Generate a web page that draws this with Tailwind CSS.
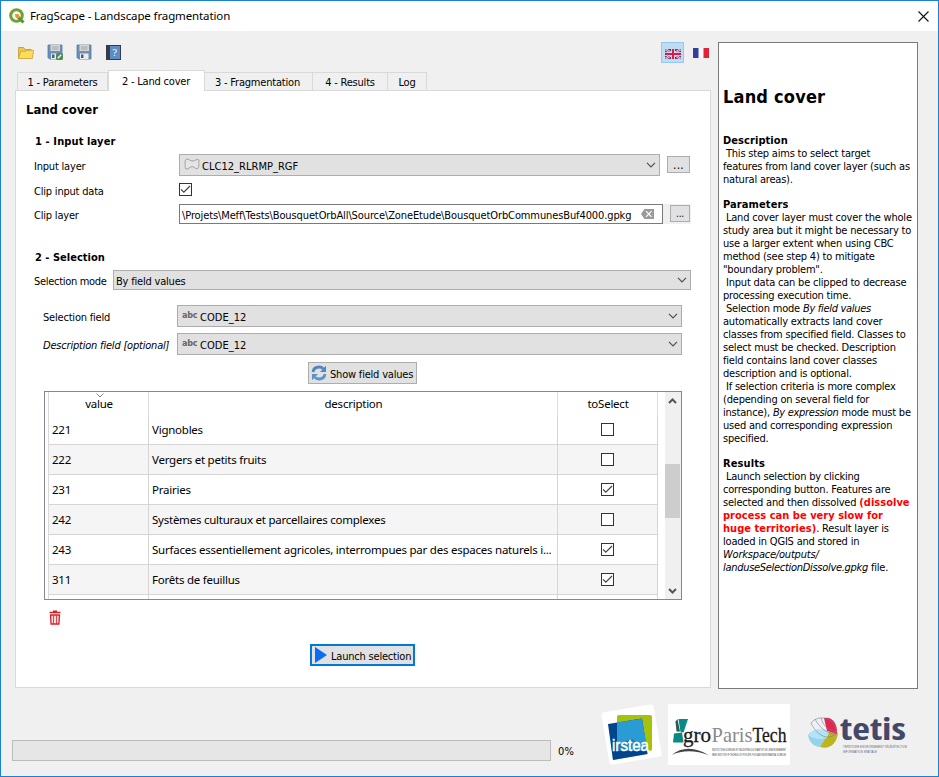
<!DOCTYPE html>
<html lang="en">
<head>
<meta charset="utf-8">
<title>FragScape - Landscape fragmentation</title>
<script src="https://cdn.jsdelivr.net/npm/@tailwindcss/browser@4"></script>
</head>
<body class="w-[939px] h-[777px] overflow-hidden">
<svg class="hidden">
  <symbol id="chev" viewBox="0 0 10 6"><path d="M1 .8 5 4.8 9 .8" fill="none" stroke="#505050" stroke-width="1.2"/></symbol>
  <symbol id="box" viewBox="0 0 13 13"><rect x=".5" y=".5" width="12" height="12" fill="#fff" stroke="#333"/></symbol>
  <symbol id="boxon" viewBox="0 0 13 13"><rect x=".5" y=".5" width="12" height="12" fill="#fff" stroke="#333"/><path d="M2 6.3 4.8 9.2 11 3" fill="none" stroke="#444" stroke-width="1.2"/></symbol>
  <symbol id="floppy" viewBox="0 0 16 16"><path d="M1 1h14v14H2.5L1 13.5z" fill="#6a8fbd" stroke="#5b7a9c" stroke-width=".8"/><rect x="3.500" y=".8" width="9.500" height="6.200" fill="#d6d6d0"/><path d="M5 3h6.500M5 5h6.500" stroke="#999" stroke-width=".8"/><rect x="4" y="9.500" width="8.500" height="5.500" fill="#ececea"/><rect x="5" y="10.500" width="2.500" height="3.500" fill="#40618d"/></symbol>
</svg>
<div class="w-[939px] h-[777px] border border-[#1a80d5] bg-[#f0f0f0] flex flex-col font-['DejaVu_Sans_Condensed','DejaVu_Sans',sans-serif] font-stretch-condensed text-[11px] leading-[13px] tracking-[-0.2px] text-black whitespace-nowrap">
  <header class="h-[30px] bg-white flex items-center pl-2 pr-[9px] shrink-0">
    <svg class="size-4" viewBox="0 0 16 16"><circle cx="7.500" cy="7.500" r="5.800" fill="none" stroke="#6ea52c" stroke-width="3"/><path d="M9 9 14.500 14.500" stroke="#589632" stroke-width="3"/><path d="M6 6h3.500L11 9 9 10.500 6.500 9.500z" fill="#f0933a"/></svg>
    <h1 class="ml-[5px] font-['Noto_Sans',sans-serif] text-[11.5px] leading-4 tracking-[-0.12px]">FragScape - Landscape fragmentation</h1>
    <svg class="size-[11px] ml-auto" viewBox="0 0 11 11"><path d="M.5.5l10 10M10.500.5l-10 10" stroke="#111" stroke-width="1.100"/></svg>
  </header>

  <div class="flex h-[658px] pt-[11px] pl-[14px] shrink-0">
    <section class="w-[696px] flex flex-col">
      <div class="h-[28px] flex items-start pl-[3px] pr-px">
        <svg class="w-4 h-[14px] mt-[4px]" viewBox="0 0 16 14"><path d="M.6 12.500V1.500h5l1.500 2h6v2" fill="#edc654" stroke="#b99429" stroke-width=".8"/><path d="M.6 12.500 2.600 5.300 8 5.300 9 4.300h6.500l-1.200 8.200z" fill="#ffdb5c" stroke="#caa233" stroke-width=".8"/></svg>
        <span class="relative ml-[13px] mt-[2px]"><svg class="size-4"><use href="#floppy"/></svg><svg class="absolute left-[9px] top-[9px] size-[7px]" viewBox="0 0 7 7"><rect width="7" height="7" rx="1.500" fill="#4d8b57"/><path d="M1.800 5.200 5.200 1.800" stroke="#fff" stroke-width="1.300"/></svg></span>
        <svg class="size-4 ml-[13px] mt-[2px]"><use href="#floppy"/></svg>
        <svg class="size-[15px] ml-[14px] mt-[3px]" viewBox="0 0 15 15"><rect x=".5" y=".5" width="14" height="14" fill="#5d8dc2" stroke="#333c49"/><rect x=".5" y=".5" width="3.500" height="14" fill="#353d48"/><text x="6.200" y="11.300" font-size="10" font-family="DejaVu Serif" fill="#fff">?</text></svg>
        <span class="ml-auto w-[23px] h-[21px] border border-[#90c8f6] bg-[#bfdcf3] flex justify-center pt-[6px]">
          <svg class="w-4 h-[10px]" viewBox="0 0 16 10"><rect width="16" height="10" fill="#3c4a94"/><path d="M0 0 16 10M16 0 0 10" stroke="#f3e8f0" stroke-width="2.200"/><path d="M0 0 16 10M16 0 0 10" stroke="#d5254a" stroke-width=".8"/><path d="M8 0v10M0 5h16" stroke="#f3e8f0" stroke-width="3.600"/><path d="M8 0v10M0 5h16" stroke="#d3204b" stroke-width="2"/></svg>
        </span>
        <svg class="w-4 h-[10px] ml-[9px] mr-px mt-[6px]" viewBox="0 0 16 10"><rect width="16" height="10" fill="#f7f7f9"/><rect width="5.500" height="10" fill="#343f99"/><rect x="10.500" width="5.500" height="10" fill="#df2339"/></svg>
      </div>
      <nav class="h-[21px] flex items-end pl-[2px] relative -mb-px z-10">
        <span class="w-[91px] h-[19px] border border-b-0 border-[#d9d9d9] pt-[3px] text-center">1 - Parameters</span>
        <span class="w-[97px] h-[21px] border border-b-0 border-[#d9d9d9] bg-white pt-[4px] pr-px text-center">2 - Land cover</span>
        <span class="w-[108px] h-[19px] border border-l-0 border-b-0 border-[#d9d9d9] pt-[3px] pr-[2px] text-center">3 - Fragmentation</span>
        <span class="w-[75px] h-[19px] border border-l-0 border-b-0 border-[#d9d9d9] pt-[3px] text-center">4 - Results</span>
        <span class="w-[39px] h-[19px] border border-l-0 border-b-0 border-[#d9d9d9] pt-[3px] text-center">Log</span>
      </nav>
      <main class="h-[598px] bg-white border border-[#d9d9d9] flex flex-col">
        <h2 class="pl-[10px] mt-[11px] h-4 font-bold text-[13px] leading-4 tracking-[-0.05px]">Land cover</h2>
        <h3 class="pl-[19px] mt-[17px] font-bold tracking-[0.12px]">1 - Input layer</h3>
        <div class="flex items-center h-[22px] mt-[6px] pl-[18px]">
          <label class="w-[145px] pt-[2px]">Input layer</label>
          <div class="w-[481px] h-[22px] border border-[#adadad] bg-[#e1e1e1] flex items-center pl-1 pr-[3px]">
            <svg class="w-4 h-[13px] mb-[2px]" viewBox="0 0 16 13"><path d="M2.500 1.200C5 .3 6 3.500 9 3c2-.3 3-1.800 5.500-1.300 1.300 1.300 0 2.600.3 4 .3 1.600 0 3.500-1.300 5C11 11 10.500 8.500 8 8.700 5.500 8.900 4.500 11.500 2 11 .5 9.500 1.500 8 1.200 6.200.8 4 .8 2.500 2.500 1.200z" fill="#e4e4e4" stroke="#989898" stroke-width=".9"/></svg>
            <span class="ml-[2px] pt-[2px] tracking-[0.03px]">CLC12_RLRMP_RGF</span>
            <svg class="w-[10px] h-[6px] ml-auto"><use href="#chev"/></svg>
          </div>
          <button class="ml-[7px] mb-px w-[23px] h-[17px] border border-[#adadad] bg-[#e1e1e1] text-[12px] leading-[14px] tracking-[0.2px]">...</button>
        </div>
        <div class="flex items-start h-[15px] mt-[7px] pl-[18px]">
          <label class="w-[145px] pt-[2px]">Clip input data</label>
          <svg class="size-[13px]"><use href="#boxon"/></svg>
        </div>
        <div class="flex items-center h-[20px] mt-[6px] pl-[18px]">
          <label class="w-[145px] pt-[2px]">Clip layer</label>
          <div class="w-[484px] h-[20px] border border-[#7a7a7a] bg-white flex items-center pl-[2px] pr-2">
            <span class="pt-[2px] tracking-[-0.11px]">\Projets\Meff\Tests\BousquetOrbAll\Source\ZoneEtude\BousquetOrbCommunesBuf4000.gpkg</span>
            <svg class="w-[13px] h-[10px] ml-auto" viewBox="0 0 13 10"><path d="M0 5 3.500 0H13V10H3.500z" fill="#9a9a9a"/><path d="M5 2.200 10.500 7.800M10.500 2.200 5 7.800" stroke="#fff" stroke-width="1.200"/></svg>
          </div>
          <div class="w-[28px] h-[20px] bg-[#f0f0f0] pl-[7px] pt-px"><button class="block w-5 h-[17px] border border-[#adadad] bg-[#e1e1e1] text-[10px] leading-[14px]">...</button></div>
        </div>
        <h3 class="pl-[19px] mt-[27px] font-bold tracking-[0.02px]">2 - Selection</h3>
        <div class="flex items-center h-[20px] mt-[6px] pl-[18px]">
          <label class="w-[79px] pt-[2px] tracking-[-0.3px]">Selection mode</label>
          <div class="w-[578px] h-[20px] border border-[#adadad] bg-[#e1e1e1] flex items-center pl-[2px] pr-[3px]"><span class="pt-[2px]">By field values</span><svg class="w-[10px] h-[6px] ml-auto"><use href="#chev"/></svg></div>
        </div>
        <div class="flex items-center h-[22px] mt-[15px] pl-[27px]">
          <label class="w-[134px] pt-[2px]">Selection field</label>
          <div class="w-[505px] h-[22px] border border-[#adadad] bg-[#e1e1e1] flex items-center pl-1 pr-[3px]"><b class="text-[9px] text-[#666] w-[18px] mb-[2px]">abc</b><span class="pt-[2px] tracking-[0.05px]">CODE_12</span><svg class="w-[10px] h-[6px] ml-auto"><use href="#chev"/></svg></div>
        </div>
        <div class="flex items-center h-[22px] mt-[6px] pl-[27px]">
          <label class="w-[134px] pt-[2px] italic">Description field [optional]</label>
          <div class="w-[505px] h-[22px] border border-[#adadad] bg-[#e1e1e1] flex items-center pl-1 pr-[3px]"><b class="text-[9px] text-[#666] w-[18px] mb-[2px]">abc</b><span class="pt-[2px] tracking-[0.05px]">CODE_12</span><svg class="w-[10px] h-[6px] ml-auto"><use href="#chev"/></svg></div>
        </div>
        <button class="ml-[292px] mt-[7px] w-[109px] h-[22px] border border-[#adadad] bg-[#e1e1e1] flex items-center pl-[2px] shrink-0">
          <svg class="size-4 mb-px" viewBox="0 0 16 16"><path d="M2 7C2.500 3.500 5 2 8 2c2 0 3.300.6 4.300 1.800" fill="none" stroke="#4f86c0" stroke-width="2.800"/><path d="M15 .8V7H9z" fill="#4f86c0"/><path d="M14 9c-.5 3.500-3 5-6 5-2 0-3.300-.6-4.300-1.800" fill="none" stroke="#5b93cd" stroke-width="2.800"/><path d="M1 15.200V9h6z" fill="#5b93cd"/></svg>
          <span class="ml-[3px] pt-[2px]">Show field values</span>
        </button>
        <div class="ml-[28px] mt-[7px] w-[638px] h-[209px] border border-[#828790] flex shrink-0 overflow-hidden font-['Noto_Sans',sans-serif] text-[11.5px] leading-4 tracking-[-0.24px]">
          <div class="ml-[3px] w-[610px] border-l border-[#d9d9d9] h-[207px]">
            <div class="h-[23px] flex text-center pt-[4px] relative">
              <svg class="absolute left-[47px] top-px w-[8px] h-[5px]" viewBox="0 0 8 5"><path d="M.5.5 4 4 7.500.5" fill="none" stroke="#888"/></svg>
              <span class="w-[100px]">value</span><span class="w-[409px]">description</span><span class="w-[100px]">toSelect</span>
              <i class="absolute left-[99px] top-0 h-6 w-px bg-[#dedede]"></i><i class="absolute left-[508px] top-0 h-6 w-px bg-[#dedede]"></i><i class="absolute left-[608px] top-0 h-6 w-px bg-[#dedede]"></i>
            </div>
            <div class="grid grid-cols-[100px_409px_100px] auto-rows-[30px] w-[609px] *:border-r *:border-b *:border-[#d5d5d5] *:flex *:items-center">
              <span class="pl-[3px]">221</span><span class="pl-[3px]">Vignobles</span><span class="justify-center"><svg class="size-[13px]"><use href="#box"/></svg></span>
              <span class="pl-[3px] bg-[#f5f5f5]">222</span><span class="pl-[3px] bg-[#f5f5f5]">Vergers et petits fruits</span><span class="bg-[#f5f5f5] justify-center"><svg class="size-[13px]"><use href="#box"/></svg></span>
              <span class="pl-[3px]">231</span><span class="pl-[3px]">Prairies</span><span class="justify-center"><svg class="size-[13px]"><use href="#boxon"/></svg></span>
              <span class="pl-[3px] bg-[#f5f5f5]">242</span><span class="pl-[3px] bg-[#f5f5f5]">Systèmes culturaux et parcellaires complexes</span><span class="bg-[#f5f5f5] justify-center"><svg class="size-[13px]"><use href="#box"/></svg></span>
              <span class="pl-[3px]">243</span><span class="pl-[3px]">Surfaces essentiellement agricoles, interrompues par des espaces naturels i...</span><span class="justify-center"><svg class="size-[13px]"><use href="#boxon"/></svg></span>
              <span class="pl-[3px] bg-[#f5f5f5]">311</span><span class="pl-[3px] bg-[#f5f5f5]">Forêts de feuillus</span><span class="bg-[#f5f5f5] justify-center"><svg class="size-[13px]"><use href="#boxon"/></svg></span>
              <span></span><span></span><span></span>
            </div>
          </div>
          <div class="ml-auto w-4 bg-[#f0f0f0] flex flex-col items-center pt-[6px] pb-[5px]">
            <svg class="w-[9px] h-[6px] mr-px" viewBox="0 0 9 6"><path d="M1 5 4.500 1.500 8 5" fill="none" stroke="#555" stroke-width="2"/></svg>
            <div class="w-[15px] h-[54px] bg-[#cdcdcd] mt-[60px] mr-px"></div>
            <svg class="w-[9px] h-[6px] mt-auto mr-px" viewBox="0 0 9 6"><path d="M1 1 4.500 4.500 8 1" fill="none" stroke="#555" stroke-width="2"/></svg>
          </div>
        </div>
        <svg class="ml-[33px] mt-[10px] w-3 h-[15px] shrink-0" viewBox="0 0 12 15"><path d="M.5 2.500h11M4 1.200h4" stroke="#d42027" stroke-width="1.300"/><path d="M1.500 5h9l-.6 9H2.100z" fill="#fbdcdc" stroke="#d42027" stroke-width="1.300"/><path d="M4.500 5.500v8M7.500 5.500v8" stroke="#d42027" stroke-width=".8"/></svg>
        <button class="ml-[294px] mt-[19px] w-[105px] h-[22px] border-2 border-[#0078d7] bg-[#e1e1e1] flex items-center pl-[3px] shrink-0">
          <svg class="w-3 h-4" viewBox="0 0 12 16"><path d="M0 0 12 8 0 16z" fill="#0a6cf5"/></svg><span class="ml-[4px] pt-[2px]">Launch selection</span>
        </button>
      </main>
    </section>

    <aside class="ml-[7px] w-[200px] h-[647px] border border-[#7a7a7a] bg-white pl-1 pt-[42px]">
      <h2 class="font-bold text-[18px] leading-6 tracking-[0.2px]">Land cover</h2>
      <h4 class="font-bold mt-[25px] tracking-[0.07px]">Description</h4>
      <p>&nbsp;This step aims to select target<br>features from land cover layer (such as<br>natural areas).</p>
      <h4 class="font-bold mt-3 tracking-[0.1px]">Parameters</h4>
      <p>&nbsp;Land cover layer must cover the whole<br>study area but it might be necessary to<br>use a larger extent when using CBC<br>method (see step 4) to mitigate<br>"boundary problem".<br>&nbsp;Input data can be clipped to decrease<br>processing execution time.<br>&nbsp;Selection mode <i class="tracking-[-0.3px]">By field values</i><br>automatically extracts land cover<br>classes from specified field. Classes to<br>select must be checked. Description<br>field contains land cover classes<br>description and is optional.<br>&nbsp;If selection criteria is more complex<br>(depending on several field for<br>instance), <i class="tracking-[-0.3px]">By expression</i> mode must be<br>used and corresponding expression<br>specified.</p>
      <h4 class="font-bold mt-3 tracking-[0.1px]">Results</h4>
      <p>&nbsp;Launch selection by clicking<br>corresponding button. Features are<br>selected and then dissolved <b class="text-[#f00] tracking-[0.02px]">(dissolve<br>process can be very slow for<br>huge territories)</b>. Result layer is<br>loaded in QGIS and stored in<br><i>Workspace/outputs/<br><span class="tracking-[-0.3px]">landuseSelectionDissolve.gpkg</span></i> file.</p>
    </aside>
  </div>

  <footer class="flex flex-1 pl-[11px] pt-[15px] items-start">
    <div class="mt-[36px] w-[539px] h-[21px] border border-[#bcbcbc] bg-[#e6e6e6]"></div>
    <span class="ml-[7px] mt-[41px] w-[43px] tracking-[0.2px]">0%</span>
    <svg class="w-[61px] h-[61px]" viewBox="0 0 61 61">
      <rect x="4" y="4" width="53" height="53" rx="3" fill="#fff" transform="rotate(-9.500 30.500 30.500)"/>
      <rect x="16" y="11" width="35" height="36" rx="2" fill="#a6c20d"/>
      <path d="M7 20 41 14.500 46.500 50 12 56z" fill="#00468c"/><path d="M16 18.500 41 14.500 46.500 47H16z" fill="#2a9bd3"/>
      <path d="M12 56 46.500 50 46 46 31 35 10 42z" fill="#00468c" opacity=".35"/>
      <text x="11" y="46.500" font-family="Liberation Sans" font-size="17" fill="#fff" stroke="#fff" stroke-width=".5" textLength="37" lengthAdjust="spacingAndGlyphs" letter-spacing="0">irstea</text>
    </svg>
    <svg class="ml-[6px] w-[122px] h-[61px]" viewBox="0 0 122 61" letter-spacing="0">
      <rect width="122" height="61" fill="#fff"/>
      <path d="M10.500 15H20L15.500 28.500 12.500 28z" fill="#078a83"/><path d="M7.500 17.500 9.500 15 12 27.500H8.500z" fill="#2d5a58"/><path d="M5 38.500 6 29.500 14 28.500 15.500 38.500z" fill="#078a83"/>
      <text x="15" y="38" font-family="Liberation Serif" font-size="21" fill="#1a1a1a" stroke="#1a1a1a" stroke-width=".3" textLength="28" lengthAdjust="spacingAndGlyphs">gro</text>
      <text x="43.500" y="38" font-family="Liberation Serif" font-size="21" fill="#8a8a8a" textLength="41" lengthAdjust="spacingAndGlyphs">Paris</text>
      <text x="84.500" y="38" font-family="Liberation Serif" font-size="21" fill="#1a1a1a" stroke="#1a1a1a" stroke-width=".3" textLength="34" lengthAdjust="spacingAndGlyphs">Tech</text>
      <path d="M4 51C13 42.500 28 42.500 41 51.500 28 46 14 46 4 51z" fill="#444"/>
      <text x="44" y="46.500" font-family="Liberation Sans" font-size="3.500" fill="#333" textLength="74" lengthAdjust="spacingAndGlyphs">INSTITUT DES SCIENCES ET INDUSTRIES DU VIVANT ET DE L'ENVIRONNEMENT</text>
      <text x="44" y="51.500" font-family="Liberation Sans" font-size="3.500" fill="#333" textLength="74" lengthAdjust="spacingAndGlyphs">PARIS INSTITUTE OF TECHNOLOGY FOR LIFE, FOOD AND ENVIRONMENTAL SCIENCES</text>
    </svg>
    <svg class="ml-[17px] w-[104px] h-[61px]" viewBox="0 0 104 61" letter-spacing="0">
      <path d="M1 31C6 25 15 24 22 28L13 43C7 43 2 38 1 31z" fill="#92d3ee"/>
      <path d="M13 43 22 28 31 29C30 39 23 46 13 43z" fill="#bcb51d"/>
      <path d="M17 14C25 12 31 20 30 30L20 27z" fill="#e1264f"/>
      <path d="M1 31C6 25 15 24 22 28l-2 6c-7 2-14 1-19-3z" fill="#b5e2f5"/>
      <g fill="none" stroke="#7a7f99" stroke-width=".6"><path d="M4 19C10 11 24 13 28 22c4 9-4 12-9 11C11 31 7 25 4 19zM8 15c4 8 11 14 21 16M14 14c2 7 7 13 16 14"/></g>
      <text x="33" y="36" font-family="Open Sans" font-weight="bold" font-size="30" fill="#43486a" textLength="66" lengthAdjust="spacingAndGlyphs">tetis</text>
      <text x="36" y="44" font-family="Liberation Sans" font-size="3.700" fill="#666a82" textLength="64" lengthAdjust="spacingAndGlyphs">TERRITOIRE ENVIRONNEMENT TÉLÉDÉTECTION</text>
      <text x="36" y="49" font-family="Liberation Sans" font-size="3.700" fill="#666a82" textLength="34" lengthAdjust="spacingAndGlyphs">INFORMATION SPATIALE</text>
    </svg>
  </footer>
</div>
</body>
</html>
